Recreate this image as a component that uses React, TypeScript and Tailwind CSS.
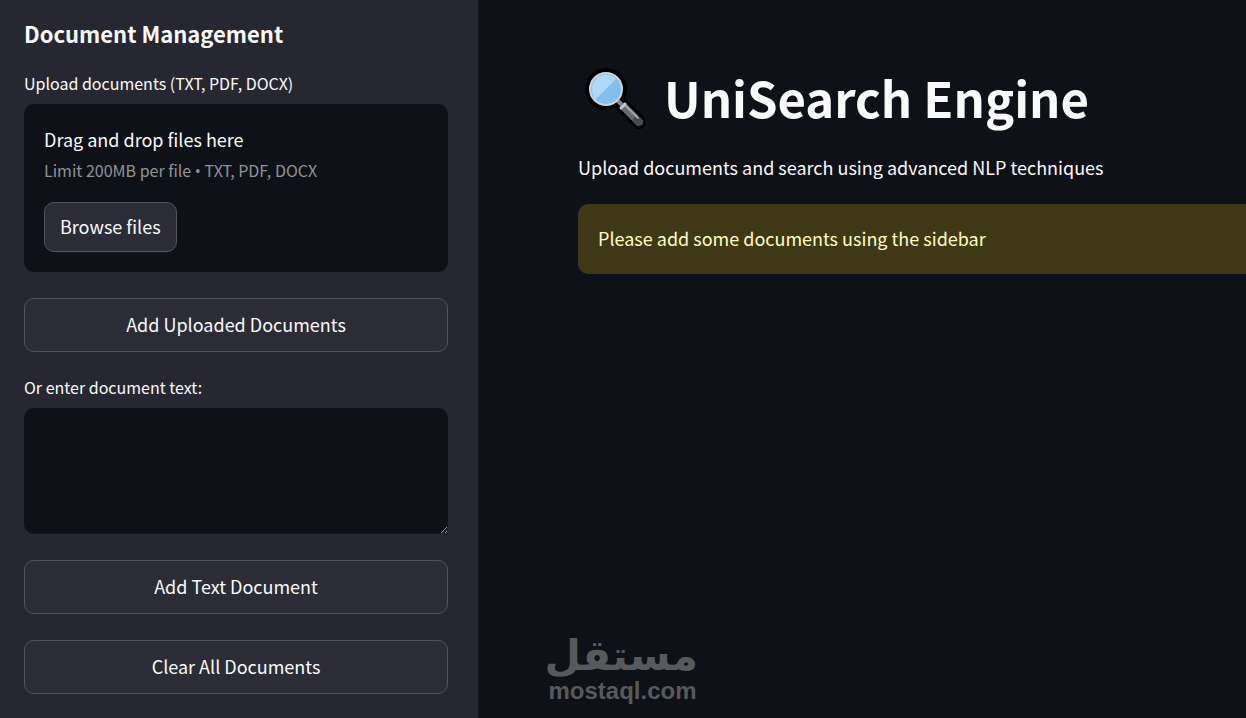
import { useRef, useState } from "react";
import type { ReactNode } from "react";

function MagnifierIcon() {
  return (
    <svg width="64" height="64" viewBox="0 0 64 64" aria-hidden="true" className="shrink-0">
      <circle cx="22" cy="23" r="21" fill="#000" />
      <path d="M34 35 55 56" stroke="#000" strokeWidth="14" strokeLinecap="round" />
      <path d="M33 34 39 40" stroke="#84898b" strokeWidth="4" />
      <path d="M40 41 55 56" stroke="#636e72" strokeWidth="8" strokeLinecap="round" />
      <path d="M53 54 55 56" stroke="#464b51" strokeWidth="8" strokeLinecap="round" />
      <path d="M42 40 54 52" stroke="#a4a8ab" strokeWidth="2" strokeLinecap="round" />
      <path d="M37 42 41 38" stroke="#c5c8ca" strokeWidth="3" strokeLinecap="round" />
      <circle cx="22" cy="23" r="16" fill="#81bfed" stroke="#d3d3d6" strokeWidth="2" />
      <path d="M12 33A13.500 13.500 0 0 1 32 13Z" fill="#b0d9f7" />
    </svg>
  );
}

function SidebarButton({ children, onClick }: { children: ReactNode; onClick?: () => void }) {
  return (
    <button
      type="button"
      onClick={onClick}
      className="mt-[26px] h-[54px] w-full rounded-[10px] border border-[#52535b] bg-[#2b2c36] pb-0.5 text-lg hover:border-[#ff4b4b]"
    >
      {children}
    </button>
  );
}

export default function App() {
  const fileRef = useRef<HTMLInputElement>(null);
  const [text, setText] = useState("");

  return (
    <div className="flex min-h-screen bg-[#0e1117] font-['Noto_Sans_CJK_SC',sans-serif] text-[#fafafa]">
      <aside className="w-[478px] shrink-0 bg-[#262730] pt-4 pr-[30px] pb-6 pl-6">
        <h2 className="text-[22px] leading-[34px] font-bold">Document Management</h2>

        <label htmlFor="files" className="mt-[22px] mb-2.5 block text-base leading-[22px]">
          Upload documents (TXT, PDF, DOCX)
        </label>
        <section className="rounded-[10px] bg-[#0e1117] px-5 pt-[19px] pb-5">
          <p className="text-lg leading-8">Drag and drop files here</p>
          <p className="text-base leading-[30px] text-[#929396]">
            Limit 200MB per file <span className="font-['Open_Sans',sans-serif] leading-none">•</span> TXT, PDF, DOCX
          </p>
          <input ref={fileRef} id="files" type="file" multiple accept=".txt,.pdf,.docx" className="hidden" />
          <button
            type="button"
            onClick={() => fileRef.current?.click()}
            className="mt-[17px] block h-[50px] rounded-[10px] border border-[#52535b] bg-[#2b2c36] px-[15px] pb-0.5 text-lg hover:border-[#ff4b4b]"
          >
            Browse files
          </button>
        </section>

        <SidebarButton>Add Uploaded Documents</SidebarButton>

        <label htmlFor="doc-text" className="mt-6 mb-2.5 block text-base leading-[22px]">
          Or enter document text:
        </label>
        <textarea
          id="doc-text"
          value={text}
          onChange={(e) => setText(e.target.value)}
          className="block h-[126px] w-full resize-y rounded-[10px] bg-[#0e1117] p-4 text-lg outline-none"
        />

        <SidebarButton>Add Text Document</SidebarButton>
        <SidebarButton onClick={() => setText("")}>Clear All Documents</SidebarButton>
      </aside>

      <main className="relative min-w-0 flex-1 pt-[66px] pl-[100px]">
        <h1 className="flex items-start gap-4 pl-1.5 text-[49px] leading-[62px] font-bold whitespace-nowrap">
          <MagnifierIcon />
          UniSearch Engine
        </h1>
        <p className="mt-[21px] mb-[21px] text-lg leading-8">Upload documents and search using advanced NLP techniques</p>
        <div
          role="alert"
          className="rounded-l-[10px] bg-[#3e3817] px-5 pt-[19px] pb-[21px] text-lg leading-[30px] text-[#ffffc2]"
        >
          Please add some documents using the sidebar
        </div>

        {/* watermark */}
        <div className="absolute bottom-3.5 left-[69px] w-[151px] text-center font-bold text-[#57595d]">
          <div lang="ar" dir="rtl" className="font-['DejaVu_Sans',sans-serif] text-[42px] leading-[44px] whitespace-nowrap">
            مستقل
          </div>
          <div className="font-['Liberation_Sans',sans-serif] text-2xl leading-[26px]">mostaql.com</div>
        </div>
      </main>
    </div>
  );
}
